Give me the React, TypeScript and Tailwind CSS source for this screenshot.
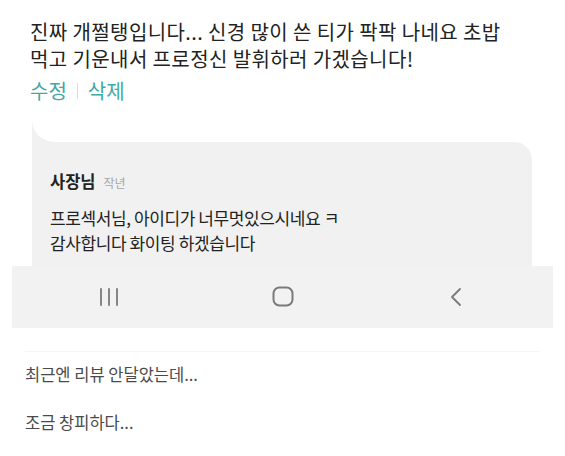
import { ReactNode } from "react";

const font = {
  fontFamily: '"Noto Sans CJK KR", "Noto Sans", sans-serif',
};

function NavBar() {
  return (
    <div className="mx-3 h-[62px] bg-[#f2f2f2] flex items-center">
      <div className="flex-1 flex justify-center pl-[10px]">
        <svg width="22" height="20" viewBox="0 0 22 20">
          <g stroke="#7a7a7a" strokeWidth="1.8" strokeLinecap="round">
            <line x1="3" y1="2" x2="3" y2="18" />
            <line x1="11" y1="2" x2="11" y2="18" />
            <line x1="19" y1="2" x2="19" y2="18" />
          </g>
        </svg>
      </div>
      <div className="flex-1 flex justify-center">
        <svg width="22" height="21" viewBox="0 0 22 21">
          <rect x="1.5" y="1.5" width="19" height="18" rx="6" fill="none" stroke="#7a7a7a" strokeWidth="2" />
        </svg>
      </div>
      <div className="flex-1 flex justify-center pr-[10px]">
        <svg width="14" height="20" viewBox="0 0 14 20">
          <polyline points="11,2 3,10 11,18" fill="none" stroke="#7a7a7a" strokeWidth="1.8" strokeLinecap="round" strokeLinejoin="round" />
        </svg>
      </div>
    </div>
  );
}

function Line({ children }: { children: ReactNode }) {
  return <p className="text-[16.5px] text-[#4a4a4a] leading-[23px]">{children}</p>;
}

export default function App() {
  return (
    <div className="w-[565px] h-[456px] bg-white overflow-hidden" style={font}>
      {/* 내 리뷰 */}
      <div className="px-[30px] pt-[18px]">
        <p className="text-[20px] leading-[27px] text-[#222] tracking-[0.4px]">
          진짜 개쩔탱입니다... 신경 많이 쓴 티가 팍팍 나네요 초밥
          <br />
          먹고 기운내서 프로정신 발휘하러 가겠습니다!
        </p>
        <div className="flex items-center mt-[5px] text-[20px] leading-[27px] text-[#3fa9a5]">
          <span>수정</span>
          <span className="mx-[10px] w-px h-[16px] bg-[#dcdcdc]" />
          <span>삭제</span>
        </div>
      </div>

      {/* 사장님 답글 */}
      <div className="mt-[12px]">
        <div className="ml-8 w-10 h-[26px] bg-[#f1f1f1]">
          <div className="h-full bg-white rounded-bl-[22px]" />
        </div>
        <div className="ml-8 mr-[33px] bg-[#f1f1f1] rounded-tr-[18px] pl-[18px] pr-4 pt-[27px] pb-[11px]">
          <div className="flex items-baseline gap-[8px]">
            <span className="text-[16.5px] font-bold text-[#222]">사장님</span>
            <span className="text-[12px] text-[#a8a8a8]">작년</span>
          </div>
          <p className="mt-[11px] text-[17px] leading-[25px] text-[#222] tracking-[-0.4px]">
            프로섹서님, 아이디가 너무멋있으시네요 ㅋ
            <br />
            감사합니다 화이팅 하겠습니다
          </p>
        </div>
      </div>

      <NavBar />

      <div className="mx-[25px] mt-[23px] border-t border-[#f5f5f5] pt-[11px] flex flex-col gap-[25px]">
        <Line>최근엔 리뷰 안달았는데...</Line>
        <Line>조금 창피하다...</Line>
      </div>
    </div>
  );
}
